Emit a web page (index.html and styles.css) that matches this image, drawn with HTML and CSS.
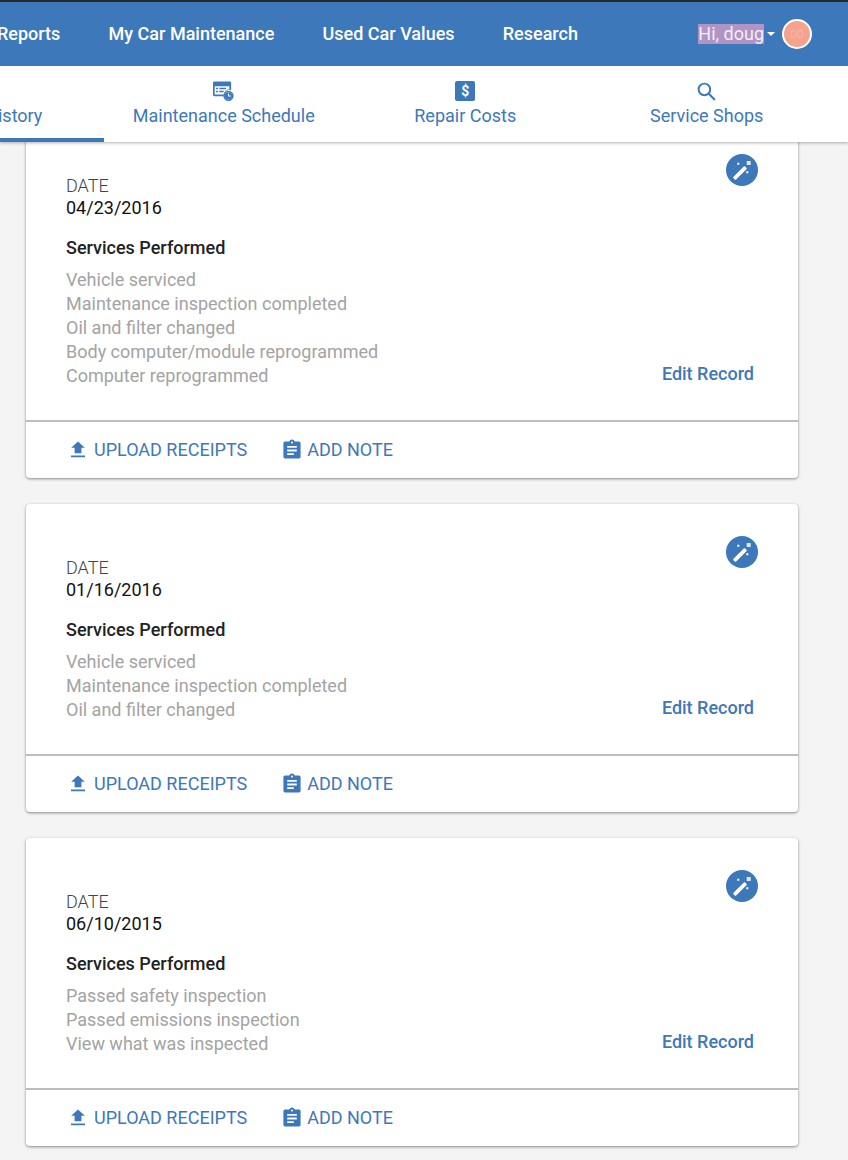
FILE: index.html
```html
<!DOCTYPE html>
<html lang="en">
<head>
<meta charset="utf-8">
<title>Service History</title>
<link rel="stylesheet" href="styles.css">
</head>
<body>
<svg class="defs" width="0" height="0" aria-hidden="true">
  <symbol id="wand" viewBox="0 0 32 32">
    <path d="M7.500 22.800 17.800 12.600a1 1 0 0 1 1.400 0l1.200 1.200a1 1 0 0 1 0 1.400L10.100 25.500a1 1 0 0 1-1.400 0l-1.200-1.300a1 1 0 0 1 0-1.400Z" fill="#fff"/>
    <path d="M20.700 7h4v4h-4z" fill="#dfe8f3"/>
    <path d="M11.300 8.700h2v2h-2zM20.300 17.300h2v2h-2z" fill="#fff"/>
  </symbol>
  <symbol id="upload" viewBox="0 0 16 18">
    <path d="M4.600 12.200V6.800H1.200L8 .4l6.800 6.400h-3.400v5.400ZM1 14.600h14v1.700H1Z" fill="#3d78ba"/>
  </symbol>
  <symbol id="note" viewBox="0 0 18 20">
    <path fill-rule="evenodd" d="M2 2.400h4.200a3 3 0 0 1 5.600 0H16a1.600 1.600 0 0 1 1.600 1.600v13.800a1.600 1.600 0 0 1-1.600 1.600H2a1.600 1.600 0 0 1-1.600-1.600V4A1.600 1.600 0 0 1 2 2.400Zm7 .1a1 1 0 1 0 0 2 1 1 0 0 0 0-2ZM4.200 7v1.800h9.600V7Zm0 3.600v1.800h9.600v-1.800Zm0 3.600V16h6.600v-1.800Z" fill="#3d78ba"/>
  </symbol>
</svg>

<header class="top">
  <nav class="main-nav">
    <ul class="nav-links">
      <li>Reports</li>
      <li>My Car Maintenance</li>
      <li>Used Car Values</li>
      <li>Research</li>
    </ul>
    <div class="user">
      <span class="greeting">Hi, doug</span>
      <span class="caret"></span>
      <span class="avatar">DO</span>
    </div>
  </nav>
  <nav class="tabs">
    <a class="tab tab-active">
      <span class="tab-icon"></span>
      <span>Service History</span>
    </a>
    <a class="tab">
      <svg class="tab-icon" viewBox="0 0 22 21">
        <path fill-rule="evenodd" d="M1.500 0h16A1.500 1.500 0 0 1 19 1.500v7.700a6 6 0 0 0-7.800 6.300H1.500A1.500 1.500 0 0 1 0 14V1.500A1.500 1.500 0 0 1 1.500 0Zm.3 5v8.700h9.500a6 6 0 0 1 5.900-5.600V5ZM3.200 6.600h2v1.600h-2Zm3.400 0h7v1.600h-7Zm-3.400 3h2v1.600h-2Zm3.400 0h4.600v1.600H6.600Z" fill="#3d78ba"/>
        <circle cx="16.200" cy="15" r="4.600" fill="none" stroke="#3d78ba" stroke-width="1.600"/>
        <circle cx="16.200" cy="15" r="3.800" fill="#3d78ba"/>
        <path d="M16.200 12.600V15.300H18.600" fill="none" stroke="#fff" stroke-width="1.100"/>
      </svg>
      <span>Maintenance Schedule</span>
    </a>
    <a class="tab">
      <span class="tab-icon dollar">$</span>
      <span>Repair Costs</span>
    </a>
    <a class="tab">
      <svg class="tab-icon" viewBox="0 0 20 20">
        <circle cx="8" cy="8" r="5.500" fill="none" stroke="#3d78ba" stroke-width="1.900"/>
        <path d="m12 12 6 6" stroke="#3d78ba" stroke-width="2" fill="none"/>
      </svg>
      <span>Service Shops</span>
    </a>
  </nav>
</header>

<main class="records">
  <article class="card">
    <div class="card-body">
      <svg class="badge"><use href="#wand"/></svg>
      <p class="date-label">DATE</p>
      <p class="date">04/23/2016</p>
      <h2 class="services-title">Services Performed</h2>
      <ul class="services">
        <li>Vehicle serviced</li>
        <li>Maintenance inspection completed</li>
        <li>Oil and filter changed</li>
        <li>Body computer/module reprogrammed</li>
        <li>Computer reprogrammed</li>
      </ul>
      <a class="edit">Edit Record</a>
    </div>
    <div class="card-actions">
      <a class="action"><svg class="icon-upload"><use href="#upload"/></svg>UPLOAD RECEIPTS</a>
      <a class="action"><svg class="icon-note"><use href="#note"/></svg>ADD NOTE</a>
    </div>
  </article>

  <article class="card">
    <div class="card-body">
      <svg class="badge"><use href="#wand"/></svg>
      <p class="date-label">DATE</p>
      <p class="date">01/16/2016</p>
      <h2 class="services-title">Services Performed</h2>
      <ul class="services">
        <li>Vehicle serviced</li>
        <li>Maintenance inspection completed</li>
        <li>Oil and filter changed</li>
      </ul>
      <a class="edit">Edit Record</a>
    </div>
    <div class="card-actions">
      <a class="action"><svg class="icon-upload"><use href="#upload"/></svg>UPLOAD RECEIPTS</a>
      <a class="action"><svg class="icon-note"><use href="#note"/></svg>ADD NOTE</a>
    </div>
  </article>

  <article class="card">
    <div class="card-body">
      <svg class="badge"><use href="#wand"/></svg>
      <p class="date-label">DATE</p>
      <p class="date">06/10/2015</p>
      <h2 class="services-title">Services Performed</h2>
      <ul class="services">
        <li>Passed safety inspection</li>
        <li>Passed emissions inspection</li>
        <li>View what was inspected</li>
      </ul>
      <a class="edit">Edit Record</a>
    </div>
    <div class="card-actions">
      <a class="action"><svg class="icon-upload"><use href="#upload"/></svg>UPLOAD RECEIPTS</a>
      <a class="action"><svg class="icon-note"><use href="#note"/></svg>ADD NOTE</a>
    </div>
  </article>
</main>
</body>
</html>
```
FILE: styles.css
```css
* { box-sizing: border-box; }
html, body { height: 100%; }
body {
  margin: 0;
  background: #f4f4f4;
  font-family: Roboto, "Liberation Sans", sans-serif;
  font-size: 18px;
  overflow: hidden;
}
p, h2, ul { margin: 0; padding: 0; }
ul { list-style: none; }
.defs { position: absolute; }

.top {
  position: relative;
  z-index: 2;
  border-top: 2px solid #25282c;
  box-shadow: 0 1px 3px rgba(0, 0, 0, .3);
}
.main-nav {
  height: 64px;
  padding-bottom: 2px;
  background: #3d78ba;
  color: #fff;
  display: flex;
  align-items: center;
  justify-content: space-between;
  padding-right: 36px;
}
.nav-links {
  display: flex;
  gap: 48.200px;
  margin-left: -3px;
  font-weight: 500;
}
.user { display: flex; align-items: center; margin-top: 2px; }
.greeting { background: #b094c4; color: #f3edf6; line-height: 20px; margin-top: -1px; }
.caret {
  margin: 0 7px 0 3px;
  border-left: 4.500px solid transparent;
  border-right: 4.500px solid transparent;
  border-top: 4.500px solid #fff;
}
.avatar {
  width: 30px;
  height: 30px;
  border-radius: 50%;
  border: 2px solid #fff;
  background: #f7a28c;
  color: #f7b4c0;
  font-size: 10px;
  display: flex;
  align-items: center;
  justify-content: center;
}

.tabs {
  height: 76px;
  background: #fff;
  display: flex;
  margin-left: -138.500px;
}
.tab {
  flex: 0 0 241.500px;
  color: #3d78ba;
  text-align: center;
  display: flex;
  flex-direction: column;
  align-items: center;
  padding-top: 15px;
  gap: 3px;
  line-height: 21px;
}
.tab-active {
  flex-basis: 242.500px;
  margin-right: -1px;
  padding-right: 1px;
  border-bottom: 4px solid #3d78ba;
}
.tab-icon { width: 21px; height: 21px; display: block; }
.dollar {
  width: 20px;
  height: 20px;
  margin-bottom: 1px;
  border-radius: 2px;
  background: #3d78ba;
  color: #fff;
  font-size: 14px;
  font-weight: 700;
  line-height: 20px;
}

.records {
  position: relative;
  z-index: 1;
  margin: -20px 50px 0 26px;
  display: flex;
  flex-direction: column;
  gap: 26px;
}
.card {
  background: #fff;
  border-radius: 4px;
  box-shadow: 0 1px 3px rgba(0, 0, 0, .45);
}
.card-body {
  position: relative;
  padding: 53px 40px 32px;
  border-bottom: 2px solid #bdbdbd;
}
.badge {
  position: absolute;
  top: 32px;
  right: 40px;
  width: 32px;
  height: 32px;
  border-radius: 50%;
  background: #3d78ba;
}
.date-label { line-height: 22px; color: #444; font-weight: 300; }
.date { line-height: 22px; color: #111; }
.services-title {
  margin-top: 18px;
  font-size: 18px;
  line-height: 22px;
  font-weight: 500;
  color: #222;
}
.services { margin-top: 9px; line-height: 24px; color: #a3a3a3; }
.edit {
  position: absolute;
  right: 44px;
  bottom: 35px;
  color: #3d78ba;
  font-weight: 500;
  line-height: 22px;
}
.card-actions {
  height: 56px;
  padding: 0 0 2px 44px;
  display: flex;
  align-items: center;
  gap: 36px;
}
.action {
  display: flex;
  align-items: center;
  color: #3d78ba;
}
.icon-upload { width: 16px; height: 18px; margin-right: 8px; margin-top: 2px; }
.icon-note { width: 18px; height: 20px; margin-right: 6px; }
```
